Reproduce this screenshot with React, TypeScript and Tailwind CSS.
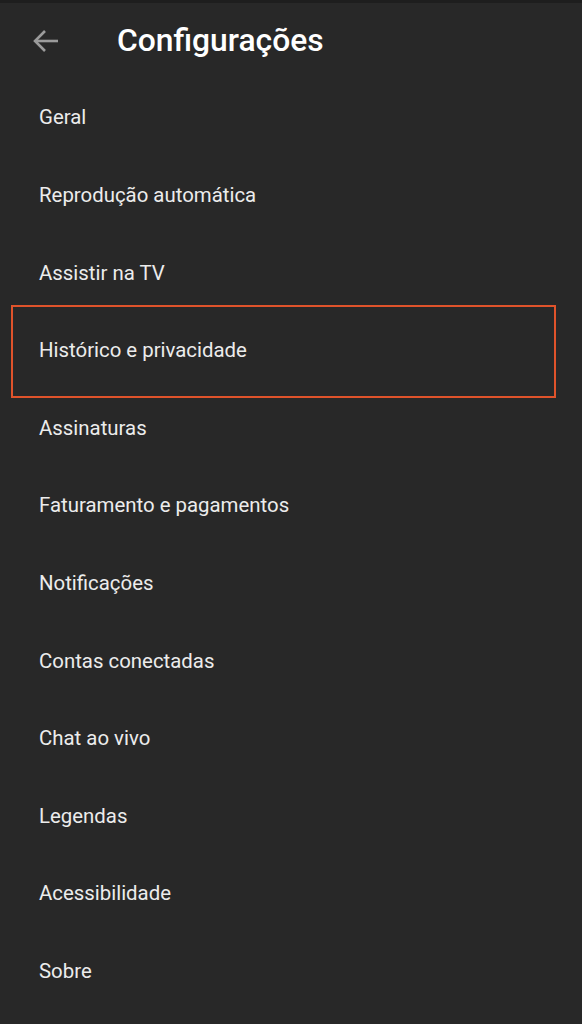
import React from 'react';

const items = [
  'Geral',
  'Reprodução automática',
  'Assistir na TV',
  'Histórico e privacidade',
  'Assinaturas',
  'Faturamento e pagamentos',
  'Notificações',
  'Contas conectadas',
  'Chat ao vivo',
  'Legendas',
  'Acessibilidade',
  'Sobre',
];

const App = () => {
  return (
    <div className="min-h-screen h-[1024px] w-[582px] overflow-hidden bg-[#282828] font-['Roboto',sans-serif]">
      <div className="h-[3px] bg-[#1e1e1e]"></div>
      {/* Header */}
      <div className="flex h-[76px] items-center">
        <div className="flex w-[117px] items-center pl-[32px]">
          <svg width="27" height="24" viewBox="0 0 27 24" fill="none" stroke="#9b9b9b" strokeWidth="2.6" strokeLinecap="butt">
            <path d="M26 12H3" />
            <path d="M13 2L3 12l10 10" />
          </svg>
        </div>
        <h1 className="text-[31.8px] font-medium text-white">Configurações</h1>
      </div>

      {/* Settings list */}
      <div className="flex flex-col">
        {items.map((item, index) => (
          <div key={index} className="relative flex h-[77.6px] items-center pl-[39px]">
            <span className="text-[20.4px] text-[#ececec]">{item}</span>
            {index === 3 && (
              <div className="absolute -top-[7px] -bottom-[9px] left-[11px] w-[545px] border-[2.5px] border-[#e0532b]"></div>
            )}
          </div>
        ))}
      </div>
    </div>
  );
};

export default App;
